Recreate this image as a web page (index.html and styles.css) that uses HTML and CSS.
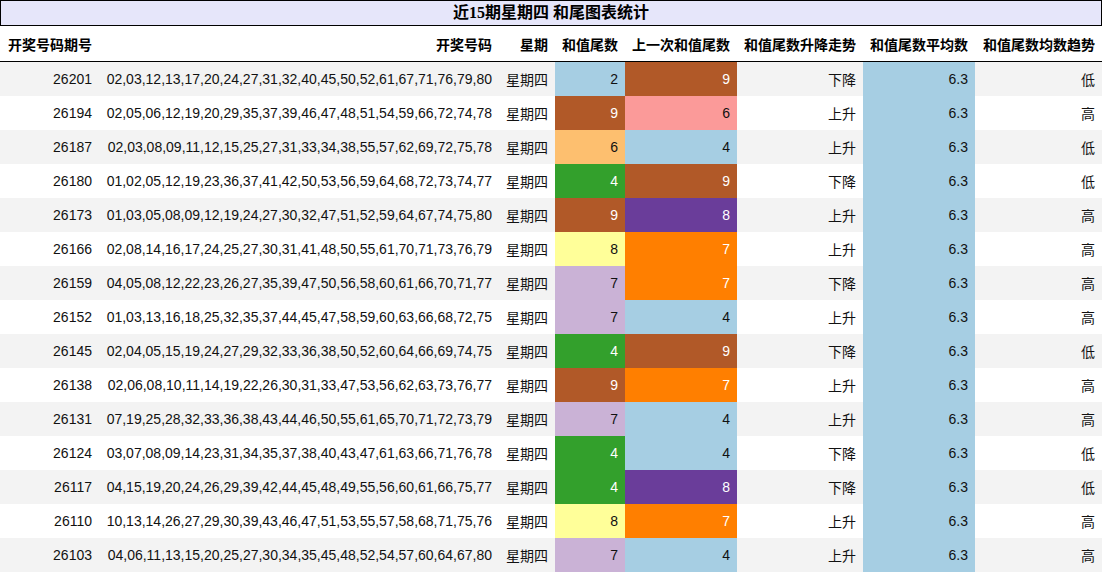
FILE: index.html
```html
<!DOCTYPE html>
<html lang="zh">
<head>
<meta charset="utf-8">
<title>近15期星期四 和尾图表统计</title>
<link rel="stylesheet" href="styles.css">
</head>
<body>
<div class="title">近15期星期四 和尾图表统计</div>
<table class="stats">
<colgroup>
<col class="c-id"><col class="c-nums"><col class="c-week"><col class="c-tail"><col class="c-prev"><col class="c-trend"><col class="c-avg"><col class="c-avgtrend">
</colgroup>
<thead>
<tr><th>开奖号码期号</th><th>开奖号码</th><th>星期</th><th>和值尾数</th><th>上一次和值尾数</th><th>和值尾数升降走势</th><th>和值尾数平均数</th><th>和值尾数均数趋势</th></tr>
</thead>
<tbody>
<tr><td>26201</td><td>02,03,12,13,17,20,24,27,31,32,40,45,50,52,61,67,71,76,79,80</td><td>星期四</td><td class="lblue">2</td><td class="brown">9</td><td>下降</td><td class="lblue">6.3</td><td>低</td></tr>
<tr><td>26194</td><td>02,05,06,12,19,20,29,35,37,39,46,47,48,51,54,59,66,72,74,78</td><td>星期四</td><td class="brown">9</td><td class="pink">6</td><td>上升</td><td class="lblue">6.3</td><td>高</td></tr>
<tr><td>26187</td><td>02,03,08,09,11,12,15,25,27,31,33,34,38,55,57,62,69,72,75,78</td><td>星期四</td><td class="lorange">6</td><td class="lblue">4</td><td>上升</td><td class="lblue">6.3</td><td>低</td></tr>
<tr><td>26180</td><td>01,02,05,12,19,23,36,37,41,42,50,53,56,59,64,68,72,73,74,77</td><td>星期四</td><td class="green">4</td><td class="brown">9</td><td>下降</td><td class="lblue">6.3</td><td>低</td></tr>
<tr><td>26173</td><td>01,03,05,08,09,12,19,24,27,30,32,47,51,52,59,64,67,74,75,80</td><td>星期四</td><td class="brown">9</td><td class="purple">8</td><td>上升</td><td class="lblue">6.3</td><td>高</td></tr>
<tr><td>26166</td><td>02,08,14,16,17,24,25,27,30,31,41,48,50,55,61,70,71,73,76,79</td><td>星期四</td><td class="yellow">8</td><td class="orange">7</td><td>上升</td><td class="lblue">6.3</td><td>高</td></tr>
<tr><td>26159</td><td>04,05,08,12,22,23,26,27,35,39,47,50,56,58,60,61,66,70,71,77</td><td>星期四</td><td class="lpurple">7</td><td class="orange">7</td><td>下降</td><td class="lblue">6.3</td><td>高</td></tr>
<tr><td>26152</td><td>01,03,13,16,18,25,32,35,37,44,45,47,58,59,60,63,66,68,72,75</td><td>星期四</td><td class="lpurple">7</td><td class="lblue">4</td><td>上升</td><td class="lblue">6.3</td><td>高</td></tr>
<tr><td>26145</td><td>02,04,05,15,19,24,27,29,32,33,36,38,50,52,60,64,66,69,74,75</td><td>星期四</td><td class="green">4</td><td class="brown">9</td><td>下降</td><td class="lblue">6.3</td><td>低</td></tr>
<tr><td>26138</td><td>02,06,08,10,11,14,19,22,26,30,31,33,47,53,56,62,63,73,76,77</td><td>星期四</td><td class="brown">9</td><td class="orange">7</td><td>上升</td><td class="lblue">6.3</td><td>高</td></tr>
<tr><td>26131</td><td>07,19,25,28,32,33,36,38,43,44,46,50,55,61,65,70,71,72,73,79</td><td>星期四</td><td class="lpurple">7</td><td class="lblue">4</td><td>上升</td><td class="lblue">6.3</td><td>高</td></tr>
<tr><td>26124</td><td>03,07,08,09,14,23,31,34,35,37,38,40,43,47,61,63,66,71,76,78</td><td>星期四</td><td class="green">4</td><td class="lblue">4</td><td>下降</td><td class="lblue">6.3</td><td>低</td></tr>
<tr><td>26117</td><td>04,15,19,20,24,26,29,39,42,44,45,48,49,55,56,60,61,66,75,77</td><td>星期四</td><td class="green">4</td><td class="purple">8</td><td>下降</td><td class="lblue">6.3</td><td>低</td></tr>
<tr><td>26110</td><td>10,13,14,26,27,29,30,39,43,46,47,51,53,55,57,58,68,71,75,76</td><td>星期四</td><td class="yellow">8</td><td class="orange">7</td><td>上升</td><td class="lblue">6.3</td><td>高</td></tr>
<tr><td>26103</td><td>04,06,11,13,15,20,25,27,30,34,35,45,48,52,54,57,60,64,67,80</td><td>星期四</td><td class="lpurple">7</td><td class="lblue">4</td><td>上升</td><td class="lblue">6.3</td><td>高</td></tr>
</tbody>
</table>
</body>
</html>
```
FILE: styles.css
```css
html, body {
  margin: 0;
  padding: 0;
  background: #ffffff;
}
body {
  width: 1102px;
  overflow: hidden;
}
.title {
  box-sizing: border-box;
  height: 26px;
  border: 1px solid #000;
  background: #e6e6fa;
  font-family: "Liberation Serif", "Noto Sans CJK SC", serif;
  font-weight: bold;
  font-size: 16px;
  line-height: 24px;
  text-align: center;
  color: #000;
}
.stats {
  width: 1102px;
  border-collapse: collapse;
  table-layout: fixed;
  font-family: "Liberation Sans", "Noto Sans CJK SC", sans-serif;
  font-size: 14px;
  color: #111;
}
.c-id { width: 99px; }
.c-nums { width: 400px; }
.c-week { width: 56px; }
.c-tail { width: 70px; }
.c-prev { width: 112px; }
.c-trend { width: 126px; }
.c-avg { width: 112px; }
.c-avgtrend { width: 127px; }
.stats th {
  height: 35px;
  padding: 0 7px;
  text-align: right;
  font-family: "Noto Sans CJK SC", sans-serif;
  font-weight: bold;
  font-size: 14px;
  color: #000;
  border-bottom: 1px solid #000;
  white-space: nowrap;
}
.stats td {
  height: 34px;
  padding: 0 7px;
  text-align: right;
  white-space: nowrap;
}
.stats tbody tr:nth-child(odd) {
  background: #f3f3f3;
}
.stats tbody tr:nth-child(even) {
  background: #ffffff;
}
.stats td.lblue { background: #a6cee3; color: #111; }
.stats td.brown { background: #b15928; color: #fff; }
.stats td.pink { background: #fb9a99; color: #111; }
.stats td.lorange { background: #fdbf6f; color: #111; }
.stats td.green { background: #33a02c; color: #fff; }
.stats td.purple { background: #6a3d9a; color: #fff; }
.stats td.yellow { background: #ffff99; color: #111; }
.stats td.orange { background: #ff7f00; color: #fff; }
.stats td.lpurple { background: #cab2d6; color: #111; }
```
